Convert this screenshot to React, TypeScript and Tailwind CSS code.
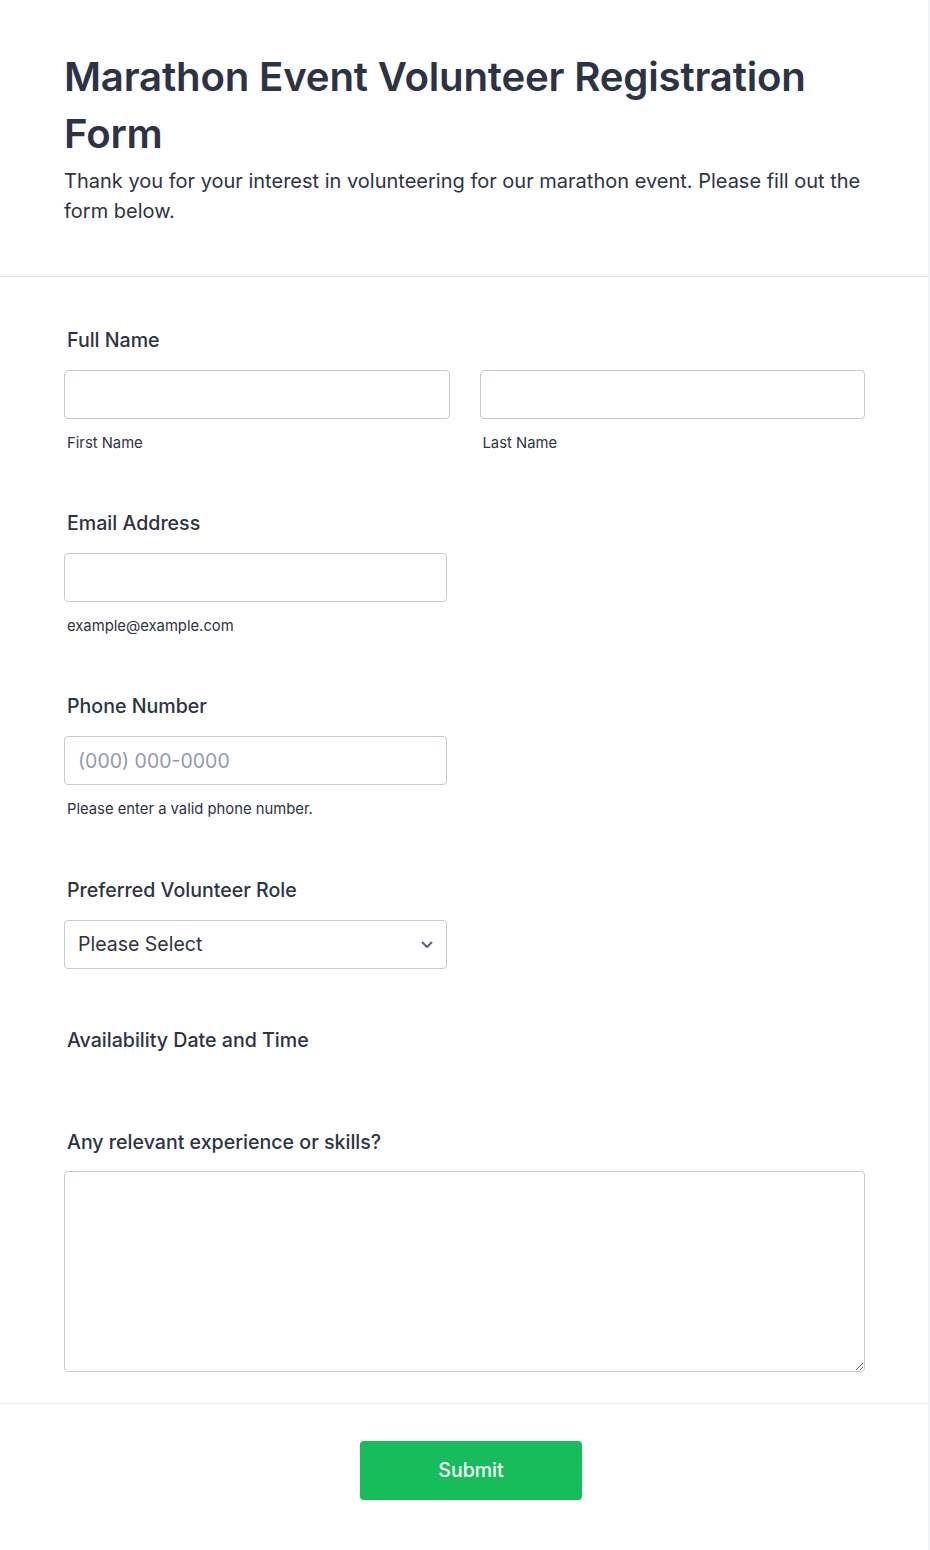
import React from 'react';

const inputCls =
  'block h-[49px] w-full rounded-[4px] border border-[#c3cad8] bg-white px-[13px] text-[19.5px] text-[#2c3345] outline-none placeholder:text-[#8f9bb3]';

function Label({ children }: { children: React.ReactNode }) {
  return <div className="pl-[3px] text-[19.6px] font-medium leading-[26px] text-[#2c3345]">{children}</div>;
}

function Sub({ children }: { children: React.ReactNode }) {
  return <div className="mt-[14px] pl-[3px] text-[14.8px] leading-[20px] text-[#2c3345]">{children}</div>;
}

export default function App() {
  return (
    <div className="min-h-[1550px] bg-white" style={{ fontFamily: 'Inter, "Noto Sans", sans-serif' }}>
      <div className="w-[929px] border-r border-[#eceef3] min-h-[1550px]">
        <div className="px-[64px] pt-[48px] pb-[50px] border-b border-[#dfe1e8]">
          <h1 className="text-[40.2px] font-semibold leading-[57px] text-[#2c3345] tracking-[-0.2px]">
            Marathon Event Volunteer Registration Form
          </h1>
          <p className="mt-[4px] text-[20px] leading-[30px] text-[#2c3345]">
            Thank you for your interest in volunteering for our marathon event. Please fill out the form below.
          </p>
        </div>

        <div className="px-[64px] pt-[50px]">
          <Label>Full Name</Label>
          <div className="mt-[17px] grid grid-cols-2 gap-[30px] w-[801px]">
            <div>
              <input className={inputCls} />
              <Sub>First Name</Sub>
            </div>
            <div>
              <input className={inputCls} />
              <Sub>Last Name</Sub>
            </div>
          </div>

          <div className="mt-[57px]">
            <Label>Email Address</Label>
            <div className="mt-[17px] w-[383px]">
              <input className={inputCls} />
              <Sub>example@example.com</Sub>
            </div>
          </div>

          <div className="mt-[57px]">
            <Label>Phone Number</Label>
            <div className="mt-[17px] w-[383px]">
              <input className={inputCls} placeholder="(000) 000-0000" />
              <Sub>Please enter a valid phone number.</Sub>
            </div>
          </div>

          <div className="mt-[58px]">
            <Label>Preferred Volunteer Role</Label>
            <div className="mt-[17px] w-[383px]">
              <div className="flex h-[49px] items-center justify-between rounded-[4px] border border-[#c3cad8] pl-[13px] pr-[13px]">
                <span className="text-[19.5px] text-[#2c3345]">Please Select</span>
                <svg width="12" height="8" viewBox="0 0 12 8" fill="none">
                  <path d="M1.5 1.5L6 6L10.5 1.5" stroke="#57647e" strokeWidth="2" strokeLinecap="round" strokeLinejoin="round" />
                </svg>
              </div>
            </div>
          </div>

          <div className="mt-[58px]">
            <Label>Availability Date and Time</Label>
          </div>

          <div className="mt-[76px]">
            <Label>Any relevant experience or skills?</Label>
            <textarea className="mt-[16px] block h-[201px] w-[801px] rounded-[4px] border border-[#c3cad8] bg-white p-[13px] outline-none" />
          </div>
        </div>

        <div className="mt-[31px] border-t border-[#eceef3] pt-[37px] flex justify-center pl-[14px]">
          <button className="h-[59px] w-[222px] rounded-[4px] bg-[#18bd5b] text-[19.5px] font-medium text-white">
            Submit
          </button>
        </div>
      </div>
    </div>
  );
}
